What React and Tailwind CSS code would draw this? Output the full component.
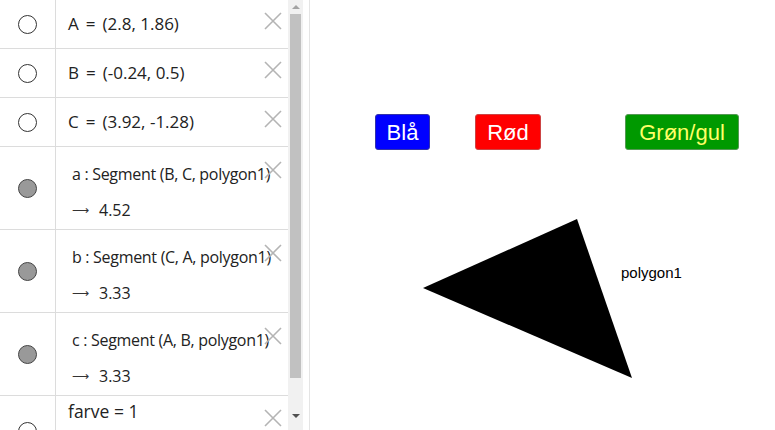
import React from 'react';

function Cross({ top = 12 }) {
    return (
        <svg width="18" height="18" viewBox="0 0 18 18" className="absolute right-[6px]" style={{ top }}>
            <path d="M1 1 L17 17 M17 1 L1 17" stroke="#b4b4b4" strokeWidth="1.6" />
        </svg>
    );
}

function Dot({ filled }) {
    return (
        <div
            className={
                filled
                    ? 'w-[19px] h-[19px] rounded-full border border-[#444] bg-[#999]'
                    : 'w-[19px] h-[19px] rounded-full border border-[#333] bg-white'
            }
        />
    );
}

function PointRow({ left, right }) {
    return (
        <div className="flex shrink-0 h-[49px] border-b border-[#dcdcdc]">
            <div className="w-[56px] shrink-0 flex items-center justify-center border-r border-[#dcdcdc]">
                <Dot />
            </div>
            <div className="relative flex-1 flex items-center pl-[12px] text-[17px] text-[#222]">
                <span className="whitespace-nowrap">
                    {left}
                    <span className="mx-[7px]">=</span>
                    {right}
                </span>
                <Cross />
            </div>
        </div>
    );
}

function SegmentRow({ name, args, value }) {
    return (
        <div className="flex shrink-0 h-[83px] border-b border-[#dcdcdc]">
            <div className="w-[56px] shrink-0 flex items-center justify-center border-r border-[#dcdcdc]">
                <Dot filled />
            </div>
            <div className="relative flex-1 flex flex-col pl-[16px] pt-[15px] text-[#222]">
                <div className="text-[16px] whitespace-nowrap tracking-[-0.3px]">
                    {name} : Segment ({args}, polygon1)
                </div>
                <div className="text-[16px] mt-[12px] flex items-center gap-[10px]">
                    <span className="text-[12px] text-[#333]">⟶</span>
                    <span>{value}</span>
                </div>
                <Cross top={14} />
            </div>
        </div>
    );
}

export default function App() {
    return (
        <div className="w-[775px] h-[430px] overflow-hidden bg-white flex" style={{ fontFamily: '"Open Sans", sans-serif' }}>
            <div className="w-[288px] shrink-0 flex flex-col overflow-hidden">
                <PointRow left="A" right="(2.8, 1.86)" />
                <PointRow left="B" right="(-0.24, 0.5)" />
                <PointRow left="C" right="(3.92, -1.28)" />
                <SegmentRow name="a" args="B, C" value="4.52" />
                <SegmentRow name="b" args="C, A" value="3.33" />
                <SegmentRow name="c" args="A, B" value="3.33" />
                <div className="flex shrink-0 h-[60px]">
                    <div className="w-[56px] shrink-0 flex justify-center pt-[26px] border-r border-[#dcdcdc]">
                        <Dot />
                    </div>
                    <div className="relative flex-1 pl-[12px] pt-[2px] text-[17.5px] text-[#222]">
                        farve = 1
                        <Cross top={13} />
                    </div>
                </div>
            </div>
            <div className="w-[15px] shrink-0 bg-[#f1f1f1] flex flex-col items-center">
                <div className="h-[14px] shrink-0 flex items-center justify-center">
                    <div className="w-0 h-0 border-l-[4px] border-r-[4px] border-b-[4px] border-l-transparent border-r-transparent border-b-[#a3a3a3]" />
                </div>
                <div className="w-[11px] h-[364px] shrink-0 bg-[#c1c1c1]" />
                <div className="flex-1" />
                <div className="h-[22px] shrink-0 flex items-start justify-center pt-[6px]">
                    <div className="w-0 h-0 border-l-[4px] border-r-[4px] border-t-[4px] border-l-transparent border-r-transparent border-t-[#505050]" />
                </div>
            </div>
            <div className="w-[7px] shrink-0 border-r border-[#e4e4e4] bg-white" />
            <div className="relative flex-1" style={{ fontFamily: '"Liberation Sans", Arial, sans-serif' }}>
                <div className="absolute left-[65px] top-[114px] w-[55px] h-[36px] rounded-[3px] border border-[#3333aa] bg-[#0000ff] text-white text-[22px] flex items-center justify-center">
                    Blå
                </div>
                <div className="absolute left-[165px] top-[114px] w-[66px] h-[36px] rounded-[3px] border border-[#cc4444] bg-[#ff0000] text-white text-[22px] flex items-center justify-center">
                    Rød
                </div>
                <div className="absolute left-[315px] top-[114px] w-[114px] h-[36px] rounded-[3px] border border-[#559955] bg-[#009900] text-[#ffff66] text-[22px] flex items-center justify-center">
                    Grøn/gul
                </div>
                <svg className="absolute left-0 top-0" width="465" height="430">
                    <polygon points="113,288 267,219 322,378" fill="#000" />
                </svg>
                <div className="absolute left-[311px] top-[262px] text-[15px] text-black">polygon1</div>
            </div>
        </div>
    );
}
